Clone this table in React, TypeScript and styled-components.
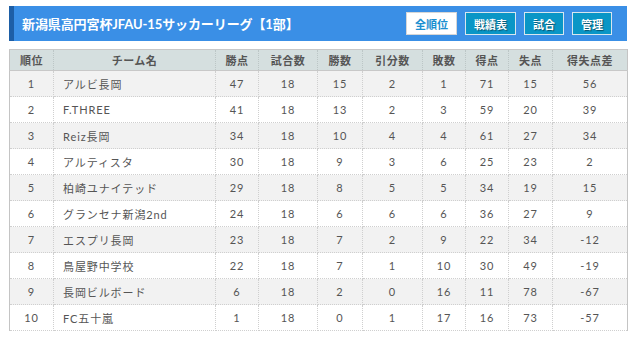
import React from 'react';
import styled, { createGlobalStyle } from 'styled-components';

const GlobalStyle = createGlobalStyle`
  body {
    margin: 0;
    background: #fff;
    font-family: Lato, "Noto Sans CJK JP", sans-serif;
  }
`;

const Page = styled.div`
  width: 618px;
  padding: 6px 0 0 9px;
`;

// 見出しバー
const TitleBar = styled.div`
  display: flex;
  align-items: center;
  justify-content: space-between;
  height: 35px;
  box-sizing: border-box;
  background: #3a8fe6;
  border-left: 5px solid #1d5ea6;
  padding: 0 15px 0 8px;

  h1 {
    margin: 0;
    color: #fff;
    font-size: 13px;
    font-weight: 700;
    letter-spacing: -0.1px;
  }
`;

const ButtonRow = styled.div`
  display: flex;
  gap: 8px;
`;

const NavButton = styled.div<{ $active?: boolean }>`
  display: flex;
  align-items: center;
  justify-content: center;
  height: 23px;
  padding: 0 8px;
  box-sizing: border-box;
  font-size: 11px;
  font-weight: 700;
  border: 1px solid ${p => (p.$active ? '#d6d6d6' : '#d8e6ee')};
  background: ${p => (p.$active ? '#fff' : '#0a96c6')};
  color: ${p => (p.$active ? '#1a8fd0' : '#fff')};
  text-shadow: ${p => (p.$active ? 'none' : '1px 1px 1px rgba(0,0,0,0.45)')};
`;

const Table = styled.table`
  margin-top: 8px;
  width: 618px;
  table-layout: fixed;
  border-collapse: collapse;
  border-left: 1px solid #c4c4c4;
  border-right: 1px solid #c4c4c4;
  border-top: 1px solid #c8c8c8;
  font-size: 11px;
  color: #555;
`;

const HeadCell = styled.th`
  height: 20px;
  padding: 0;
  background: #d5dfdf;
  font-weight: 700;
  text-align: center;
  letter-spacing: 0.5px;
  border-bottom: 1px solid #c8c8c8;
  border-right: 1px dotted #bcc6c6;

  &:last-child {
    border-right: none;
  }
`;

const Row = styled.tr<{ $odd: boolean }>`
  background: ${p => (p.$odd ? '#f2f2f2' : '#fff')};
`;

const Cell = styled.td<{ $left?: boolean }>`
  height: 25px;
  padding: 0 ${p => (p.$left ? '9px' : '0')};
  text-align: ${p => (p.$left ? 'left' : 'center')};
  letter-spacing: 0.9px;
  border-bottom: 1px dotted #cfcfcf;
  border-right: 1px dotted #cfcfcf;
  white-space: nowrap;

  &:last-child {
    border-right: none;
  }
`;

const columns = [
  { label: '順位', width: 44 },
  { label: 'チーム名', width: 162 },
  { label: '勝点', width: 43 },
  { label: '試合数', width: 59 },
  { label: '勝数', width: 45 },
  { label: '引分数', width: 60 },
  { label: '敗数', width: 43 },
  { label: '得点', width: 43 },
  { label: '失点', width: 44 },
  { label: '得失点差', width: 75 },
];

const standings: [number, string, number, number, number, number, number, number, number, number][] = [
  [1, 'アルビ長岡', 47, 18, 15, 2, 1, 71, 15, 56],
  [2, 'F.THREE', 41, 18, 13, 2, 3, 59, 20, 39],
  [3, 'Reiz長岡', 34, 18, 10, 4, 4, 61, 27, 34],
  [4, 'アルティスタ', 30, 18, 9, 3, 6, 25, 23, 2],
  [5, '柏崎ユナイテッド', 29, 18, 8, 5, 5, 34, 19, 15],
  [6, 'グランセナ新潟2nd', 24, 18, 6, 6, 6, 36, 27, 9],
  [7, 'エスプリ長岡', 23, 18, 7, 2, 9, 22, 34, -12],
  [8, '鳥屋野中学校', 22, 18, 7, 1, 10, 30, 49, -19],
  [9, '長岡ビルボード', 6, 18, 2, 0, 16, 11, 78, -67],
  [10, 'FC五十嵐', 1, 18, 0, 1, 17, 16, 73, -57],
];

export default function App() {
  return (
    <Page>
      <GlobalStyle />
      <TitleBar>
        <h1>新潟県高円宮杯JFAU-15サッカーリーグ【1部】</h1>
        <ButtonRow>
          <NavButton $active>全順位</NavButton>
          <NavButton>戦績表</NavButton>
          <NavButton>試合</NavButton>
          <NavButton>管理</NavButton>
        </ButtonRow>
      </TitleBar>

      <Table>
        <colgroup>
          {columns.map(c => (
            <col key={c.label} style={{ width: c.width }} />
          ))}
        </colgroup>
        <thead>
          <tr>
            {columns.map(c => (
              <HeadCell key={c.label}>{c.label}</HeadCell>
            ))}
          </tr>
        </thead>
        <tbody>
          {standings.map((row, i) => (
            <Row key={row[0]} $odd={i % 2 === 0}>
              {row.map((v, j) => (
                <Cell key={j} $left={j === 1}>
                  {v}
                </Cell>
              ))}
            </Row>
          ))}
        </tbody>
      </Table>
    </Page>
  );
}
